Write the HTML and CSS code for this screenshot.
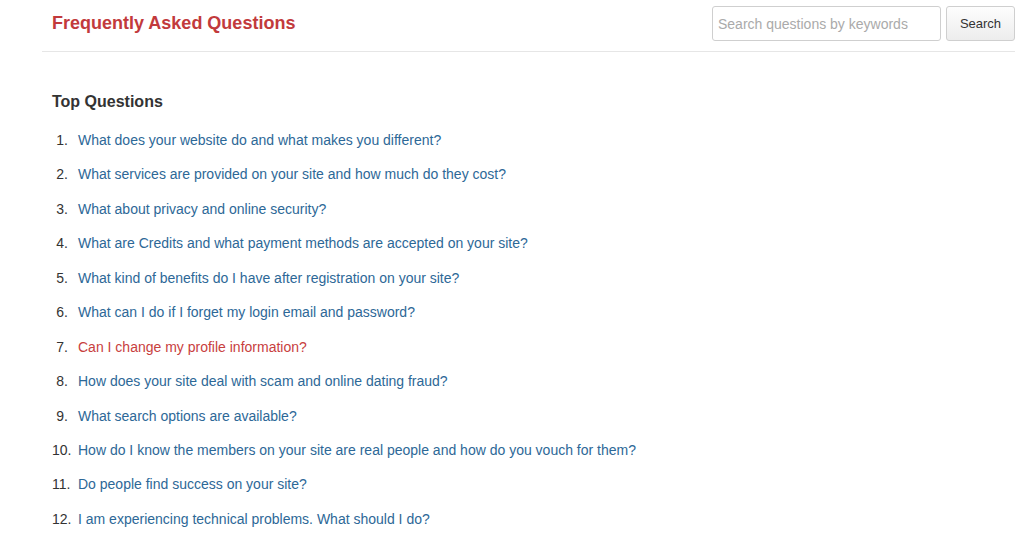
FILE: index.html
```html
<!DOCTYPE html>
<html>
<head>
<meta charset="utf-8">
<link rel="stylesheet" href="styles.css">
</head>
<body>
<div class="page">
  <header class="header">
    <h1 class="title">Frequently Asked Questions</h1>
    <form class="search">
      <input class="search-input" type="text" placeholder="Search questions by keywords">
      <button class="search-btn" type="button">Search</button>
    </form>
  </header>
  <main class="content">
    <h2 class="section-title">Top Questions</h2>
    <ol class="questions">
      <li><a href="#">What does your website do and what makes you different?</a></li>
      <li><a href="#">What services are provided on your site and how much do they cost?</a></li>
      <li><a href="#">What about privacy and online security?</a></li>
      <li><a href="#">What are Credits and what payment methods are accepted on your site?</a></li>
      <li><a href="#">What kind of benefits do I have after registration on your site?</a></li>
      <li><a href="#">What can I do if I forget my login email and password?</a></li>
      <li><a href="#" class="active">Can I change my profile information?</a></li>
      <li><a href="#">How does your site deal with scam and online dating fraud?</a></li>
      <li><a href="#">What search options are available?</a></li>
      <li><a href="#">How do I know the members on your site are real people and how do you vouch for them?</a></li>
      <li><a href="#">Do people find success on your site?</a></li>
      <li><a href="#">I am experiencing technical problems. What should I do?</a></li>
    </ol>
  </main>
</div>
</body>
</html>
```

FILE: styles.css
```css
html, body {
  margin: 0;
  padding: 0;
  background: #fff;
  font-family: "Liberation Sans", Arial, sans-serif;
  color: #333;
}
.page {
  margin-left: 42px;
  margin-right: 9px;
}
.header {
  display: flex;
  align-items: flex-start;
  justify-content: space-between;
  height: 51px;
  border-bottom: 1px solid #e6e6e6;
}
.title {
  margin: 12px 0 0 10px;
  font-size: 18px;
  line-height: 22px;
  font-weight: bold;
  color: #c23a3c;
}
.search {
  display: flex;
  gap: 5px;
  margin-top: 6px;
}
.search-input {
  box-sizing: border-box;
  width: 229px;
  height: 35px;
  border: 1px solid #cfcfcf;
  border-radius: 3px;
  padding: 0 5px;
  font-family: "Liberation Sans", Arial, sans-serif;
  font-size: 14px;
  color: #333;
  outline: none;
}
.search-input::placeholder {
  color: #aaa;
}
.search-btn {
  box-sizing: border-box;
  width: 69px;
  height: 35px;
  border: 1px solid #cfcfcf;
  border-radius: 3px;
  background: linear-gradient(#fdfdfd, #ededed);
  font-family: "Liberation Sans", Arial, sans-serif;
  font-size: 13px;
  color: #333;
}
.content {
  padding-left: 10px;
}
.section-title {
  margin: 40px 0 0 0;
  font-size: 16px;
  line-height: 20px;
  font-weight: bold;
  color: #333;
}
.questions {
  list-style: none;
  margin: 18px 0 0 0;
  padding: 0;
  counter-reset: q;
}
.questions li {
  counter-increment: q;
  font-size: 14px;
  line-height: 20px;
  margin-bottom: 14.45px;
}
.questions li::before {
  content: counter(q) ".";
  display: inline-block;
  width: 16px;
  margin-right: 10px;
  text-align: right;
  color: #333;
}
.questions a {
  color: #2d6897;
  text-decoration: none;
}
.questions a.active {
  color: #c8403e;
}
```
